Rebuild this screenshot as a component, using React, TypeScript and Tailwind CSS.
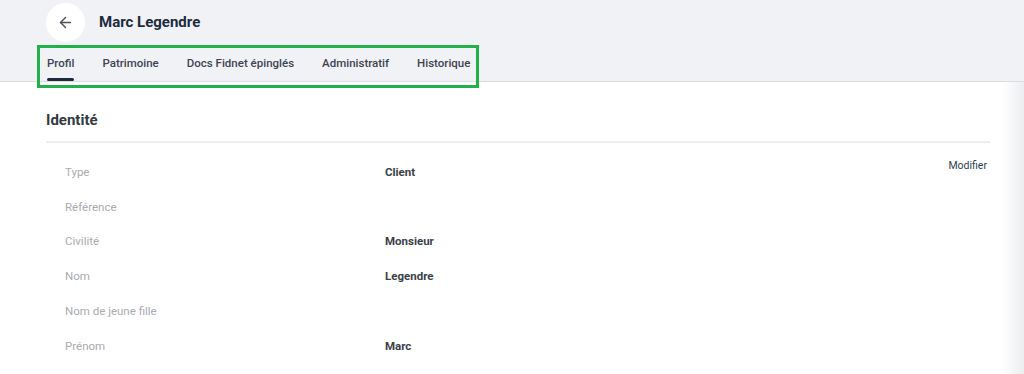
import { ArrowLeft } from 'lucide-react';

const tabs = ['Profil', 'Patrimoine', 'Docs Fidnet épinglés', 'Administratif', 'Historique'];

const rows: { label: string; value?: string }[] = [
  { label: 'Type', value: 'Client' },
  { label: 'Référence' },
  { label: 'Civilité', value: 'Monsieur' },
  { label: 'Nom', value: 'Legendre' },
  { label: 'Nom de jeune fille' },
  { label: 'Prénom', value: 'Marc' },
];

export default function App() {
  return (
    <div className="h-[374px] w-[1024px] overflow-hidden bg-white font-['Roboto',sans-serif]">
      {/* Header */}
      <div className="h-[82px] border-b border-[#dcdde3] bg-[#f1f2f6]">
        <div className="flex items-center pl-[46px] pt-[3px]">
          <button className="flex h-[39px] w-[39px] items-center justify-center rounded-full bg-white text-[#4a4f5a]">
            <ArrowLeft className="h-[17px] w-[17px]" strokeWidth={2} />
          </button>
          <h1 className="ml-[14px] text-[15px] font-bold text-[#1d2b3e]">Marc Legendre</h1>
        </div>

        {/* Tabs */}
        <div className="relative ml-[37px] mt-[3px] w-[442px]">
          <div className="flex gap-[28px] pl-[10px] pt-[9px]">
            {tabs.map((tab, i) => (
              <div key={tab} className="flex flex-col items-center">
                <span className="whitespace-nowrap text-[11.5px] font-medium leading-[18px] text-[#3d4450]">{tab}</span>
                <span className={i === 0 ? 'mt-[6px] h-[3px] w-full rounded-full bg-[#1d2b3e]' : 'mt-[6px] h-[3px]'} />
              </div>
            ))}
          </div>
          {/* annotation frame */}
          <div className="pointer-events-none absolute inset-0 h-[43px] border-[3px] border-[#22b04b]" />
        </div>
      </div>

      {/* Content */}
      <div className="flex h-[292px]">
        <div className="flex-1 pl-[46px] pr-[12px]">
          <h2 className="pt-[28px] text-[15px] font-bold leading-[20px] text-[#333a44]">Identité</h2>
          <div className="mt-[11px] h-[2px] bg-[#ececec]" />
          <div className="relative pl-[19px] pt-[12px]">
            <button className="absolute right-[3px] top-[15px] text-[10.5px] text-[#2c3e50]">Modifier</button>
            {rows.map((row) => (
              <div key={row.label} className="flex h-[34.8px] items-center text-[11.5px]">
                <span className="w-[320px] text-[#a8abb0]">{row.label}</span>
                <span className="font-bold text-[#3a4049]">{row.value}</span>
              </div>
            ))}
          </div>
        </div>
        <div className="w-[22px] bg-gradient-to-r from-white to-[#eceef1]" />
      </div>
    </div>
  );
}
